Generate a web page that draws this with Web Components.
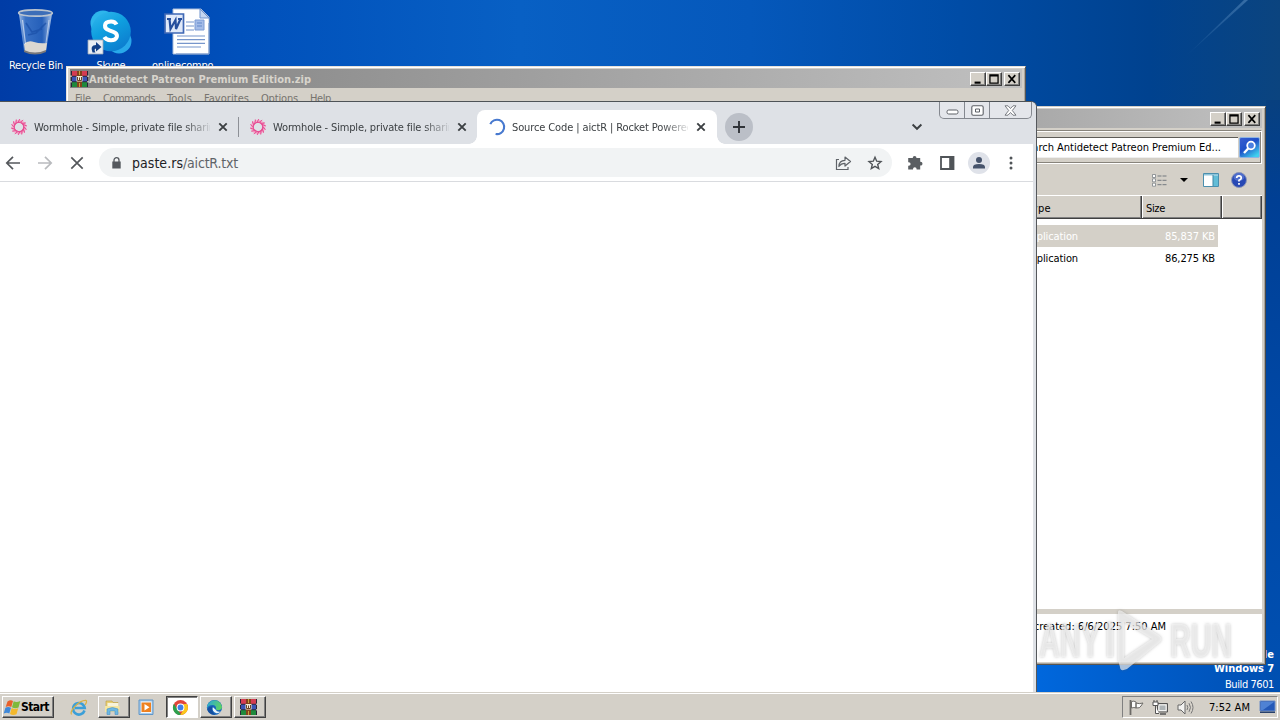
<!DOCTYPE html>
<html lang="en">
<head>
<meta charset="utf-8">
<title>Desktop</title>
<style>
html,body{margin:0;padding:0;width:1280px;height:720px;overflow:hidden;font:11px/14px "DejaVu Sans Condensed","DejaVu Sans",sans-serif;color:#000}
</style>
</head>
<body>
<win-desktop></win-desktop>
<script>
const define = (name, html, init) => {
  const tpl = document.createElement('template');
  tpl.innerHTML = html;
  customElements.define(name, class extends HTMLElement {
    constructor() {
      super();
      this.attachShadow({ mode: 'open' }).append(tpl.content.cloneNode(true));
    }
    connectedCallback() { if (init) init(this, this.shadowRoot); }
  });
};

/* A one-line label whose tracking is adjusted to the width given in "w". */
define('fit-text', `<style>
  :host{display:block;white-space:nowrap;flex:none}
  span{display:inline-block;white-space:pre}
</style><span><slot></slot></span>`, (el, root) => {
  const w = +el.getAttribute('w');
  const span = root.querySelector('span');
  if (!w) return;
  const n = el.textContent.length;
  const fit = () => {
    span.style.letterSpacing = '0px';
    const nat = span.getBoundingClientRect().width;
    if (nat) {
      span.style.letterSpacing = ((w - nat) / n) + 'px';
      el.style.width = w + 'px';
    }
  };
  queueMicrotask(fit);
});

/* ---------- icons ---------- */
const ICONS = {
  bin: [40, 48, `<defs><linearGradient id="g" x2="1"><stop stop-color="#d5e6f8" stop-opacity=".75"/><stop offset=".2" stop-color="#5f93d8" stop-opacity=".6"/><stop offset=".7" stop-color="#3d74c4" stop-opacity=".6"/><stop offset="1" stop-color="#dbe9f8" stop-opacity=".8"/></linearGradient></defs>
    <path d="M3 5L8 42Q19 48 30 42L36 5z" fill="url(#g)"/><path d="M8 35Q12 31 18 33T31 34L30 42Q19 47 9 42z" fill="#e6ded2" opacity=".95"/><path d="M8 41Q19 46 30 41L30 43Q19 48 8 43z" fill="#77777a"/><ellipse cx="19.500" cy="4" rx="16.800" ry="3.200" fill="#3d6eb8" stroke="#b9c3cf" stroke-width="1.700"/><path d="M30 14L20 24l-8 2M10 14l6 9 10-3" fill="none" stroke="#1a4fa6" stroke-width="1.600" opacity=".7"/><path d="M6.500 11l3 24" stroke="#fff" stroke-width="1.200" opacity=".55"/><path d="M33 11l-3 23" stroke="#fff" opacity=".5"/>`],
  skype: [48, 48, `<defs><linearGradient id="g" x2=".6" y2="1"><stop stop-color="#35b9ef"/><stop offset=".5" stop-color="#0f9fdf"/><stop offset="1" stop-color="#0c7fd0"/></linearGradient></defs>
    <circle cx="16" cy="14" r="12.500" fill="#2db5ec"/><circle cx="32" cy="32" r="12.500" fill="#28a9ea"/><circle cx="24" cy="22.500" r="19.800" fill="url(#g)"/>
    <path d="M29.500 15.500Q28 12.300 24 12.400C16 12.800 16.700 19.500 22 21.200C27 22.800 31 24 29.700 28.200C28 32.500 19.500 32 17.300 28" fill="none" stroke="#fff" stroke-width="4"/>
    <path d="M1 31h15v14H1z" fill="#e9edf3" stroke="#9aa7b8" stroke-width=".8"/><path d="M5.500 43.500Q2.500 36 9 36V33l5.500 5-5.500 4.500V39.500Q6.500 40 8.500 43.500z" fill="#123f86"/>`],
  word: [48, 48, `<path d="M9 1h28l8 8v37H9z" fill="#fff" stroke="#a9bddc"/><path d="M36 1v9h9z" fill="#c5d7f1" stroke="#6e93cd"/><path d="M12 46h33V15" fill="none" stroke="#6e90c6"/>
    <path d="M22 14h8M22 18h8M22 22h8M13 28h28M13 31.700h28M13 35.300h28M13 39h24" stroke="#7796cb" stroke-width="1.200"/><path d="M31 12h9v10h-9z" fill="#a4bce8" stroke="#7c9cd4"/><path d="M33 15h5M33 18h5" stroke="#6289cb" fill="none"/>
    <path d="M1 6h18.500v19H1z" fill="#e0e9f9" stroke="#3f68b5" stroke-width="1.700"/><path d="M3 11h4M14 11h4M5.500 11l1 10 5-9 .5 9L16.500 11" fill="none" stroke="#264f9d" stroke-width="2.200"/>`],
  rar: [17, 16, `<path d="M0 0h17v16H0z" fill="#2b2436"/><path d="M1 0h15v4.800H1z" fill="#d43c52"/><path d="M1 5.700h15v4.600H1z" fill="#3b54b4"/><path d="M1 11.200h15V16H1z" fill="#1f8a3c"/><path d="M0 4.500v1.500M0 10v1.500M17 4.500v1.500M17 10v1.500" stroke="#d4d0c8" stroke-width="1.500"/><path d="M6 0h5v16H6z" fill="#83421c"/><path d="M5.500 5h6v5.500h-6z" fill="#f2ecd4"/><path d="M6.500 6v3.500h4V6M8.500 6.500v3" stroke="#6b4528" fill="none"/><path d="M8.500 0v4M8.500 12v4" stroke="#c9a23c"/>`],
  worm: [18, 18, ''],
  spin: [16, 16, `<path d="M1.300 5.200A7.200 7.200 0 1 1 6.600 15" fill="none" stroke="#4779cf" stroke-width="2.100"/>`],
  tabx: [10, 10, `<path d="M1.300 1.300l7.400 7.400m0-7.400L1.300 8.700" stroke="#3c4043" stroke-width="1.900"/>`],
  plus: [28, 28, `<circle cx="14" cy="14" r="14" fill="#bbbfc7"/><path d="M14 8v12M8 14h12" stroke="#303338" stroke-width="1.900"/>`],
  chev: [12, 8, `<path d="M1.600 1.500L6 5.800l4.400-4.300" fill="none" stroke="#3c4043" stroke-width="1.900"/>`],
  back: [16, 16, `<path d="M15 8H2M8 1.800L1.800 8 8 14.200" fill="none" stroke="#55585c" stroke-width="1.700"/>`],
  fwd: [16, 16, `<path d="M1 8h13M8 1.800L14.200 8 8 14.200" fill="none" stroke="#b9bbbe" stroke-width="1.700"/>`],
  stop: [14, 14, `<path d="M1.300 1.300l11.400 11.400m0-11.400L1.300 12.700" stroke="#55585c" stroke-width="1.700"/>`],
  lock: [9, 12, `<path d="M2 5V3.200a2.500 2.500 0 0 1 5 0V5" fill="none" stroke="#55595e" stroke-width="1.300"/><path d="M.3 4.500h8.400v7H.3z" fill="#55595e"/>`],
  share: [17, 16, `<path d="M4 4.500H1.500v10h11.500V12" fill="none" stroke="#5f6368" stroke-width="1.200"/><path d="M3.900 11.500Q4 5.500 10 5.300V2l5.500 4.500L10 11V8.300Q6 8.300 3.900 11.500z" fill="none" stroke="#5f6368" stroke-width="1.200" stroke-linejoin="round"/>`],
  star: [14, 14, `<path d="M7 1.200l1.700 4 4.300.4-3.300 2.800 1 4.200L7 10.400l-3.700 2.200 1-4.200L1 5.600l4.300-.4z" fill="none" stroke="#505458" stroke-width="1.400"/>`],
  puzzle: [16, 16, `<path d="M5.700 3a1.900 1.900 0 0 1 3.800 0h3.700v3.800h.4a1.900 1.900 0 0 1 0 3.800h-.4v4H9.600v-.6a1.800 1.800 0 0 0-3.600 0v.6H1.200V10.800h.6a1.800 1.800 0 0 0 0-3.600h-.6V3z" fill="#5a5e62"/>`],
  side: [15, 14, `<path d="M1 1h12.500v12H1z" fill="#fff" stroke="#505458" stroke-width="1.800"/><path d="M9.200 1h4.300v12H9.200z" fill="#505458"/>`],
  user: [22, 22, `<circle cx="11" cy="11" r="11" fill="#dfe2e9"/><circle cx="11" cy="8" r="3" fill="#46536b"/><path d="M5 16.500v-1.500q0-3 6-3t6 3v1.500z" fill="#46536b"/>`],
  dots: [4, 14, `<circle cx="2" cy="2" r="1.500" fill="#505458"/><circle cx="2" cy="7" r="1.500" fill="#505458"/><circle cx="2" cy="12" r="1.500" fill="#505458"/>`],
  cmin: [13, 6, `<rect x="1" y="1" width="11" height="4" rx="1.700" fill="#fff" stroke="#5d6066"/>`],
  cmax: [13, 11, `<rect x=".8" y=".8" width="11.400" height="9.400" rx="1.500" fill="#fff" stroke="#5d6066" stroke-width="1.100"/><path d="M4.500 4h4v3h-4z" fill="#fff" stroke="#5d6066"/>`],
  cx: [13, 11, `<path d="M1 .8h3l2.500 2.700L9 .8h3L8.300 5.500 12 10.200H9L6.500 7.500 4 10.200H1l3.700-4.700z" fill="#fff" stroke="#6d7077" stroke-width=".9"/>`],
  min: [16, 14, `<path d="M4 10h7v2.500H4z"/>`],
  max: [16, 14, `<path d="M2.500 1.500h11v11h-11zM4 4v7h8V4z" fill-rule="evenodd"/>`],
  close: [16, 14, `<path d="M3.800 2.500l8 9M11.800 2.500l-8 9" stroke="#000" stroke-width="1.900"/>`],
  find: [21, 21, `<defs><linearGradient id="g" x2=".7" y2="1"><stop stop-color="#3c5fd0"/><stop offset=".5" stop-color="#1e50c8"/><stop offset="1" stop-color="#3fd0ee"/></linearGradient></defs><rect x=".5" y=".5" width="20" height="20" rx="1.500" fill="url(#g)" stroke="#8eb4e4"/><circle cx="12" cy="8.500" r="3.800" fill="#4a7fe0" stroke="#fff" stroke-width="1.800"/><path d="M9.200 11.500L5 16" stroke="#fff" stroke-width="2.400"/>`],
  view: [15, 13, `<path d="M.5.500h3v3h-3zM.5 4.800h3v3h-3zM.5 9.200h3v3h-3z" fill="#fff" stroke="#7b8187" stroke-width=".8"/><path d="M5.500 2h4M10.500 2h4M5.500 6.300h4M10.500 6.300h4M5.500 10.700h4M10.500 10.700h4" stroke="#73797f"/>`],
  drop: [8, 4, `<path d="M0 0h8L4 4z"/>`],
  pane: [16, 14, `<path d="M.5.500h15v13H.5z" fill="#fff" stroke="#4b8fae"/><path d="M1 1h14v1.500H1z" fill="#8ec4da"/><path d="M10 2.500h5V13h-5z" fill="#62bdd7"/><path d="M10 2v11" stroke="#3e86a5"/>`],
  help: [16, 16, `<circle cx="8" cy="8" r="7.500" fill="#2748b4" stroke="#8c96b8"/><ellipse cx="8" cy="5" rx="5.500" ry="4" fill="#6f8ce0" opacity=".55"/><path d="M5.700 6Q5.700 3.800 8 3.800T10.300 6Q10.300 7.300 8 8.300V9.500M8 11v1.800" fill="none" stroke="#fff" stroke-width="1.700"/>`],
  start: [17, 17, `<path d="M3.500 2.500Q6.500 .5 9 2L7.300 8Q4.500 6.300 1.700 8z" fill="#e8602a"/><path d="M9.700 2.300Q12.500 4 16.300 2L14.500 8.500Q11 10 8 8.200z" fill="#7fb93c"/><path d="M1.400 8.800Q4 7.300 7 8.700L5.300 14.500Q3 13 -.3 14.500z" fill="#3f88d8"/><path d="M7.700 9Q10.800 10.700 14.200 9.200L12.500 15.200Q9 16.700 6 15z" fill="#f3b82c"/>`],
  ie: [17, 17, `<path d="M14.500 11.500A5.800 5.800 0 1 1 14.700 9H5" fill="none" stroke="#3b9fd8" stroke-width="2.600"/><path d="M1.500 15.500C-1.500 13 9 1 15.800 1.300 17.300 1.700 16.300 4 15 6" fill="none" stroke="#d9b144" stroke-width="1.300"/>`],
  folder: [17, 17, `<path d="M2 2h6l1 1.500h5V12H2z" fill="#e9cf73" stroke="#b99a3f" stroke-width=".6"/><path d="M3.500 4h11v4h-11z" fill="#f7f3da"/><path d="M1 7h14.500v6H1z" fill="#f5e6a0"/><path d="M3 15.500V10Q8.500 7 14 10v5.500h-3V12H6v3.500z" fill="#6db8e2" stroke="#4a91c4" stroke-width=".6"/>`],
  wmp: [17, 17, `<path d="M1 1h14v14.500H1z" fill="#a9cbe9" stroke="#5f96c9"/><path d="M3 2.500h10.500v11.500H3z" fill="#f4f8fb"/><path d="M3.500 3.500h9.500v9.500H3.500z" fill="#ee8120"/><path d="M6.500 5v6.500L11.500 8.200z" fill="#fff"/>`],
  chrome: [17, 17, `<circle cx="8.500" cy="8.500" r="7.500" fill="#e2453a"/><path d="M2 4.750L5.500 10.500 9.300 16A7.500 7.500 0 0 1 2 4.750z" fill="#2da04d"/><path d="M15 4.900A7.500 7.500 0 0 1 8.300 16L11.800 10l-.5-5.100z" fill="#fbc81b"/><circle cx="8.500" cy="8.500" r="3.900" fill="#fff"/><circle cx="8.500" cy="8.500" r="2.900" fill="#3f7ee8"/>`],
  edge: [17, 17, `<defs><linearGradient id="g" x2="1" y2=".3"><stop stop-color="#2aa5dc"/><stop offset="1" stop-color="#5bd06a"/></linearGradient></defs><circle cx="8.500" cy="8.500" r="7.600" fill="#1767bd"/><path d="M1 7.500A7.600 7.600 0 0 1 16 7.800Q16 11 12.500 11.200 9.500 11 10 9.500 10.300 6.300 6.500 6Q2.500 6.200 1 9z" fill="url(#g)"/><path d="M6.700 8Q5.500 12.500 10.500 14.300 13 14.500 15 12.500 11 13.500 9.500 10.500z" fill="#e9f4fa"/><path d="M6.700 7.500Q4.800 12 9 15.600 3 16 1.200 10.500 3 7 6.700 7.500z" fill="#154f9f"/>`],
  flag: [17, 17, `<path d="M2.500 1v15" stroke="#6c6a66" stroke-width="1.800"/><path d="M3.500 2.500Q6 1.500 8 3v6Q6 8 3.500 9zM8 4q3 1.300 7 0l-2 3q-1 2.500-5 2z" fill="#fbfbfa" stroke="#6c6a66"/>`],
  net: [17, 17, `<path d="M5.500 4.500h10v8.500h-10z" fill="#cfcfcb" stroke="#555"/><path d="M7 6h7v5.500H7z" fill="#aeb4b6" stroke="#fff" stroke-width=".8"/><path d="M8 15h6" stroke="#555" stroke-width="1.500"/><path d="M1 3h5v3.500H1zM2 1v2M5 1v2M3.500 7v7.500H7" fill="#fff" stroke="#555"/>`],
  vol: [17, 17, `<path d="M1 6h3l4-4v13l-4-4H1z" fill="#f2f2f0" stroke="#666"/><path d="M10 6q1.500 2.500 0 5M12 4.200q3 4.300 0 8.600M14 2.500q4 6 0 12" fill="none" stroke="#777"/>`],
  desk: [17, 14, `<path d="M1 1h15v10H1z" fill="#2459b8" stroke="#6e8fc6"/><path d="M2 2h13L4 10H2z" fill="#6d9ee6" opacity=".6"/><path d="M1 11.500h15V13H1z" fill="#27406b"/>`]
};
{
  let s = '';
  for (let i = 0; i < 14; i++) s += `<path d="M6.500 4.800Q11 4.600 13.200 2.200" transform="rotate(${i * 360 / 14} 9 9)" fill="none" stroke="#e64c92" stroke-width="1"/>`;
  ICONS.worm[2] = `<circle cx="9" cy="9" r="6" fill="none" stroke="#f3b4d0" stroke-width="2.600"/>` + s;
}
define('ui-icon', `<style>:host{display:block;flex:none}svg{display:block;overflow:visible}</style><div></div>`, (el, root) => {
  const [w, h, body] = ICONS[el.getAttribute('name')];
  const W = el.getAttribute('w') || w, H = el.getAttribute('h') || h;
  root.querySelector('div').innerHTML = `<svg width="${W}" height="${H}" viewBox="0 0 ${w} ${h}">${body}</svg>`;
});

/* ---------- classic window pieces ---------- */
define('caption-buttons', `<style>
  :host{display:flex;flex:none}
  ui-icon{width:14px;height:12px;background:#d4d0c8;border:1px solid;border-color:#fff #404040 #404040 #fff;box-shadow:inset -1px -1px #808080}
  ui-icon:last-child{margin-left:2px}
</style><ui-icon name="min" w="14" h="12"></ui-icon><ui-icon name="max" w="14" h="12"></ui-icon><ui-icon name="close" w="14" h="12"></ui-icon>`);

define('archive-window', `<style>
  :host{display:flex;flex-direction:column;box-sizing:border-box;background:#d4d0c8;border:1px solid;border-color:#e6e2dc #555 #555 #e6e2dc;box-shadow:inset 1px 1px #fff,inset -1px 0 #aaa69f;padding:2px 3px 0}
  header{display:flex;align-items:center;height:19px;background:linear-gradient(90deg,#808080,#c0c0c0);color:#d8d4cc;font-weight:bold;padding:0 2px 0 1px}
  header fit-text{margin:2px 0 0 1px}
  nav{display:flex;gap:12px;padding:4px 5px;color:#77746f}
</style>
<header><ui-icon name="rar"></ui-icon><fit-text w="222">Antidetect Patreon Premium Edition.zip</fit-text><span style="flex:1"></span><caption-buttons></caption-buttons></header>
<nav><fit-text w="16">File</fit-text><fit-text w="52">Commands</fit-text><fit-text w="25">Tools</fit-text><fit-text w="45">Favorites</fit-text><fit-text w="37">Options</fit-text><fit-text w="21">Help</fit-text></nav>`);

define('explorer-window', `<style>
  :host{display:flex;flex-direction:column;box-sizing:border-box;background:#d4d0c8;border:1px solid;border-color:#d4d0c8 #4a4a48 #5a5650 #d4d0c8;box-shadow:inset 0 1px #fff,inset -1px -1px #a8a49c;padding:2px 3px 2px 0}
  header{display:flex;align-items:center;justify-content:flex-end;height:19px;background:linear-gradient(90deg,#a6a6a6,#c0c0c0);padding-right:2px}
  .addr{display:flex;align-items:center;height:32px;border:1px solid #fff;border-color:#87837b #fff #fff;box-shadow:inset 0 1px #fff,inset -1px -1px #87837b;margin-top:2px;padding:0 1px 0 0;gap:1px;box-sizing:content-box}
  .box{display:flex;flex:1;justify-content:flex-end;align-items:center;height:19px;background:#fff;border-top:1px solid #5e5c57;border-bottom:1px solid #eee;padding-right:17px}
  .box fit-text{margin-top:1px}
  .tools{display:flex;align-items:center;justify-content:flex-end;height:32px;padding-right:15px}
  .cols{display:flex;height:22px;border-bottom:1px solid #404040;box-shadow:0 -1px #fff}
  .cols div{box-sizing:border-box;border-right:1px solid #404040;border-left:1px solid #fff;box-shadow:inset -1px -1px #808080;padding:6px 3px 0}
  .list{flex:1;background:#fff;padding-top:6px}
  .row{display:flex;align-items:center;height:22px;width:217px;box-sizing:border-box;padding:1px 3px 0 0}
  .row.sel{background:#d4d0c8;color:#fff}
  .row span{flex:1}
  .details{height:53px;background:#fff;border-top:5px solid #d4d0c8;padding-top:6px;box-sizing:border-box;display:flex}
</style>
<header><caption-buttons></caption-buttons></header>
<div class="addr"><div class="box"><fit-text w="201">Search Antidetect Patreon Premium Ed...</fit-text></div><ui-icon name="find"></ui-icon></div>
<div class="tools"><ui-icon name="view"></ui-icon><ui-icon name="drop" style="margin:0 15px 0 13px"></ui-icon><ui-icon name="pane"></ui-icon><ui-icon name="help" style="margin-left:12px"></ui-icon></div>
<div class="cols"><div style="width:141px;padding-left:25px"><fit-text w="24">Type</fit-text></div><div style="width:80px"><fit-text w="19">Size</fit-text></div><div style="flex:1"></div></div>
<div class="list">
  <div class="row sel"><fit-text w="54" style="margin-left:23px">Application</fit-text><span></span><fit-text w="50">85,837 KB</fit-text></div>
  <div class="row"><fit-text w="54" style="margin-left:23px">Application</fit-text><span></span><fit-text w="50">86,275 KB</fit-text></div>
</div>
<div class="details"><fit-text w="159" style="margin-left:6px">Date created: 6/6/2025 7:50 AM</fit-text></div>`);

/* ---------- browser ---------- */
define('browser-tab', `<style>
  :host{display:flex;align-items:center;width:239px;height:34px;box-sizing:border-box;padding:0 10px 0 10px;flex:none;position:relative;color:#3c4043}
  :host([active]){background:#fff;border-radius:8px 8px 0 0;width:240px;padding-left:11px}
  :host([active])::before,:host([active])::after{content:"";position:absolute;bottom:0;width:8px;height:8px;left:-8px;background:radial-gradient(circle at 0 0,transparent 7.500px,#fff 8px)}
  :host([active])::after{left:auto;right:-8px;background:radial-gradient(circle at 100% 0,transparent 7.500px,#fff 8px)}
  :host([rule])::after{content:"";position:absolute;right:0;top:7px;height:20px;width:1px;background:#8d9096}
  .i{width:18px;display:flex;justify-content:center}
  .t{width:176px;margin:1px 8px 0 6px;overflow:hidden;-webkit-mask:linear-gradient(90deg,#000 150px,transparent 180px)}
</style><div class="i"><slot name="icon"></slot></div><div class="t"><slot></slot></div><ui-icon name="tabx"></ui-icon>`);

define('browser-window', `<style>
  :host{display:flex;flex-direction:column;box-sizing:border-box;background:#fff;border-top:1px solid #4e5357;border-right:1px solid #55585c;border-radius:0 6px 0 0;overflow:hidden;position:relative;box-shadow:inset -3px 0 #dee1e6}
  .strip{display:flex;background:#dee1e6;height:42px;padding-top:0;align-items:flex-end}
  .new{align-self:flex-end;margin:0 0 3px 8px}
  .chev{margin:0 0 13px 158px}
  .caps{position:absolute;right:4px;top:0;display:flex;height:16px;border:1px solid #84888f;border-top:0;border-radius:0 0 5px 5px;background:#e4e6eb}
  .caps div{display:flex;align-items:center;justify-content:center;border-right:1px solid #84888f}
  .caps div:last-child{border:0}
  .bar{display:flex;align-items:center;height:37px;border-bottom:1px solid #d9dbdf;padding-left:5px;margin-right:3px}
  .omni{display:flex;align-items:center;width:793px;height:29px;border-radius:15px;background:#f1f3f4;margin-left:15px;box-sizing:border-box;padding:0 10px 0 13px;font-size:14px;line-height:18px}
</style>
<div class="strip">
  <browser-tab rule><ui-icon slot="icon" name="worm"></ui-icon><fit-text w="187">Wormhole - Simple, private file sharing</fit-text></browser-tab>
  <browser-tab><ui-icon slot="icon" name="worm"></ui-icon><fit-text w="187">Wormhole - Simple, private file sharing</fit-text></browser-tab>
  <browser-tab active style="margin-left:-1px"><ui-icon slot="icon" name="spin"></ui-icon><fit-text w="181">Source Code | aictR | Rocket Powered</fit-text></browser-tab>
  <ui-icon class="new" name="plus"></ui-icon>
  <ui-icon class="chev" name="chev"></ui-icon>
</div>
<div class="caps"><div style="width:24px"><ui-icon name="cmin" style="padding-top:3px"></ui-icon></div><div style="width:24px"><ui-icon name="cmax"></ui-icon></div><div style="width:41px"><ui-icon name="cx"></ui-icon></div></div>
<div class="bar">
  <ui-icon name="back"></ui-icon><ui-icon name="fwd" style="margin-left:16px"></ui-icon><ui-icon name="stop" style="margin-left:17px"></ui-icon>
  <div class="omni"><ui-icon name="lock"></ui-icon><fit-text w="51" style="margin-left:11px;color:#202124">paste.rs</fit-text><fit-text w="55" style="color:#5f6368">/aictR.txt</fit-text><span style="flex:1"></span><ui-icon name="share"></ui-icon><ui-icon name="star" style="margin-left:16px"></ui-icon></div>
  <ui-icon name="puzzle" style="margin-left:15px"></ui-icon><ui-icon name="side" style="margin-left:17px"></ui-icon><ui-icon name="user" style="margin-left:13px"></ui-icon><ui-icon name="dots" style="margin-left:19px"></ui-icon>
</div>`);

/* ---------- taskbar ---------- */
define('task-button', `<style>
  :host{display:flex;align-items:center;justify-content:center;width:32px;height:22px;box-sizing:border-box;border:1px solid transparent;flex:none;padding-right:3px}
  :host([kind=up]){border-color:#fff #404040 #404040 #fff;box-shadow:inset -1px -1px #808080}
  :host([kind=down]){border-color:#404040 #fff #fff #404040;box-shadow:inset 1px 1px #808080;background:#fff}
</style><slot></slot>`);
define('task-bar', `<style>
  :host{display:flex;align-items:center;box-sizing:border-box;background:#d4d0c8;border-top:1px solid #d4d0c8;box-shadow:inset 0 1px #fff;padding:1px 2px 0;gap:2px}
  .start{width:52px;font-weight:bold;font-size:12px;margin-right:8px}
  .tray{display:flex;align-items:center;margin-left:auto;height:22px;box-sizing:border-box;border:1px solid;border-color:#808080 #fff #fff #808080;padding:0 1px 0 5px;width:156px}
</style>
<task-button class="start" kind="up"><ui-icon name="start"></ui-icon><fit-text w="28">Start</fit-text></task-button>
<task-button><ui-icon name="ie"></ui-icon></task-button><task-button kind="up"><ui-icon name="folder"></ui-icon></task-button><task-button><ui-icon name="wmp"></ui-icon></task-button><task-button kind="down"><ui-icon name="chrome"></ui-icon></task-button><task-button kind="up"><ui-icon name="edge"></ui-icon></task-button><task-button kind="up"><ui-icon name="rar"></ui-icon></task-button>
<div class="tray"><ui-icon name="flag"></ui-icon><ui-icon name="net" style="margin-left:7px"></ui-icon><ui-icon name="vol" style="margin-left:8px"></ui-icon><fit-text w="41" style="margin-left:15px;padding-top:1px">7:52 AM</fit-text><ui-icon name="desk" style="margin-left:auto"></ui-icon></div>`);

/* ---------- desktop ---------- */
define('desk-icon', `<style>
  :host{position:absolute;display:flex;flex-direction:column;align-items:center;width:74px;color:#fff;text-shadow:1px 1px 1px #0026}
  div{height:50px;display:flex;align-items:flex-start;justify-content:center}
</style><div><slot name="icon"></slot></div><slot></slot>`);
define('water-mark', `<style>
  :host{position:absolute;left:1038px;top:608px;width:204px;height:66px;pointer-events:none}
  svg{display:block;filter:drop-shadow(0 0 1.500px rgba(90,90,90,.5))}
  text{font:bold 49px "Liberation Sans",sans-serif;fill:#f6f6f6;fill-opacity:.66}
  path{fill:#f6f6f6;fill-opacity:.66}
</style><svg width="204" height="66" viewBox="0 0 204 66"><text x="1" y="49" textLength="61" lengthAdjust="spacingAndGlyphs">ANY</text><text x="132" y="49" textLength="62" lengthAdjust="spacingAndGlyphs">RUN</text>
<path d="M69 14h6v35h-6z"/><path fill-rule="evenodd" d="M80 4q0-3 4-1l38 25q3 3 0 6L89 61q-7 3-7-2l-2-7zM86 14v36l28-19z"/></svg>`);
define('win-desktop', `<style>
  :host{display:block;position:relative;width:1280px;height:720px;overflow:hidden;
    background:linear-gradient(90deg,#003ca6 0,#0050bb 240px,#0860c4 520px,#0558bb 750px,#004ca6 960px,#00428f 1150px,#0b447f 1280px)}
  .low{position:absolute;left:1030px;right:0;top:600px;bottom:28px;background:linear-gradient(90deg,#0068de,#0050b4 236px,#004fb0)}
  .edge{position:absolute;left:1266px;right:0;top:100px;bottom:28px;background:linear-gradient(#08407f,#003f94 100px,#0047a4 300px,#0050b2)}
  .ray{position:absolute;left:0;top:0}
  archive-window{position:absolute;left:66px;top:66px;width:960px;height:50px}
  explorer-window{position:absolute;left:1000px;top:106px;width:266px;height:559px}
  browser-window{position:absolute;left:0;top:101px;width:1037px;height:591px}
  task-bar{position:absolute;left:0;right:0;top:692px;height:28px}
  .build{position:absolute;right:6px;top:648px;display:flex;flex-direction:column;align-items:flex-end;color:#fff;line-height:14px}
  .build b{display:block}
</style>
<svg class="ray" width="1280" height="110"><defs><linearGradient id="r" x1="1" x2="0" y2="1"><stop stop-color="#6fa0d0" stop-opacity=".45"/><stop offset="1" stop-color="#6fa0d0" stop-opacity="0"/></linearGradient></defs><path d="M1248 0L1184 58 1244 0z" fill="url(#r)"/></svg>
<div class="low"></div><div class="edge"></div>
<desk-icon style="left:-1px;top:9px"><ui-icon slot="icon" name="bin"></ui-icon><fit-text w="54">Recycle Bin</fit-text></desk-icon>
<desk-icon style="left:74px;top:9px"><ui-icon slot="icon" name="skype"></ui-icon><fit-text w="29">Skype</fit-text></desk-icon>
<desk-icon style="left:150px;top:9px"><ui-icon slot="icon" name="word" style="margin:-1px -2px 0 0"></ui-icon><fit-text w="70">onlinecompo...</fit-text></desk-icon>
<archive-window></archive-window>
<div class="build"><b><fit-text w="57">Test Mode</fit-text></b><b><fit-text w="60">Windows 7</fit-text></b><fit-text w="49" style="margin-top:2px">Build 7601</fit-text></div>
<explorer-window></explorer-window>
<browser-window></browser-window>
<water-mark></water-mark>
<task-bar></task-bar>`);
</script>
</body>
</html>
